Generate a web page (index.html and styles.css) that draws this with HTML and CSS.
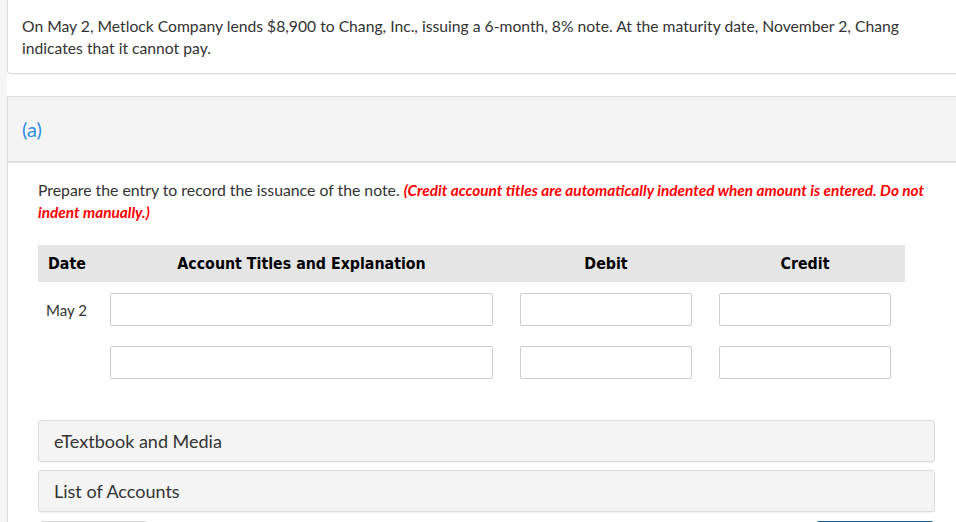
FILE: index.html
```html
<!DOCTYPE html>
<html>
<head>
<meta charset="utf-8">
<link rel="stylesheet" href="styles.css">
</head>
<body>
<main class="page">
  <div class="question-card">
    <p class="question-text">On May 2, Metlock Company lends $8,900 to Chang, Inc., issuing a 6-month, 8% note. At the maturity date, November 2, Chang indicates that it cannot pay.</p>
  </div>

  <section class="part">
    <header class="part-header"><span class="part-label">(a)</span></header>
    <div class="part-body">
      <p class="instructions">Prepare the entry to record the issuance of the note. <em class="warning">(Credit account titles are automatically indented when amount is entered. Do not indent manually.)</em></p>

      <div class="journal">
        <div class="journal-head">
          <div class="th th-date">Date</div>
          <div class="th th-acct">Account Titles and Explanation</div>
          <div class="th th-amt">Debit</div>
          <div class="th th-amt">Credit</div>
        </div>
        <div class="journal-row">
          <div class="cell cell-date">May 2</div>
          <div class="cell cell-acct"><input class="field" type="text"></div>
          <div class="cell cell-amt"><input class="field" type="text"></div>
          <div class="cell cell-amt"><input class="field" type="text"></div>
        </div>
        <div class="journal-row">
          <div class="cell cell-date"></div>
          <div class="cell cell-acct"><input class="field" type="text"></div>
          <div class="cell cell-amt"><input class="field" type="text"></div>
          <div class="cell cell-amt"><input class="field" type="text"></div>
        </div>
      </div>

      <div class="resources">
        <div class="resource">eTextbook and Media</div>
        <div class="resource">List of Accounts</div>
      </div>

      <div class="actions">
        <div class="btn btn-secondary"></div>
        <div class="btn btn-primary"></div>
      </div>
    </div>
  </section>
</main>
</body>
</html>
```

FILE: styles.css
```css
html, body {
  margin: 0;
  padding: 0;
  overflow: hidden;
}

body {
  background: #f6f6f6;
  font-family: Lato, "Open Sans", sans-serif;
  color: #333333;
  width: 956px;
  height: 522px;
}

.page {
  margin-left: 7px;
  width: 960px;
  min-height: 522px;
  background: #ffffff;
}

.question-card {
  background: #ffffff;
  border: 1px solid #dcdcdc;
  border-top: none;
  border-radius: 0 0 4px 4px;
  padding: 15px 14px 14px 14px;
  box-shadow: 0 1px 1px rgba(0,0,0,0.04);
}

.question-text {
  margin: 0;
  font-size: 15.7px;
  line-height: 22px;
  width: 900px;
}

.part {
  margin-top: 22px;
  border: 1px solid #dcdcdc;
  border-bottom: none;
  border-right: none;
}

.part-header {
  height: 64px;
  background: #f4f4f4;
  border-bottom: 2px solid #dfdfdf;
  display: flex;
  align-items: center;
  padding-left: 14px;
}

.part-label {
  color: #2f8ae0;
  font-size: 20px;
}

.part-body {
  padding: 16px 30px 0 30px;
}

.instructions {
  margin: 0;
  font-size: 15.8px;
  line-height: 22px;
  width: 900px;
}

.warning {
  color: #ff0000;
  font-weight: bold;
  font-style: italic;
  font-size: 15.35px;
}

.journal {
  margin-top: 22px;
  width: 867px;
}

.journal-head,
.journal-row {
  display: grid;
  grid-template-columns: 72px 397px 199px 199px;
}

.journal-head {
  background: #e5e5e5;
  height: 37px;
  align-items: center;
}

.th {
  font-family: "DejaVu Sans Condensed", "DejaVu Sans", Verdana, sans-serif;
  font-weight: bold;
  font-size: 15.8px;
  color: #000000;
}

.th-date {
  padding-left: 10px;
}

.th-acct {
  text-align: center;
  padding-right: 14px;
}

.th-amt {
  text-align: center;
  padding: 0 14px 0 13px;
}

.journal-row {
  margin-top: 11px;
  align-items: center;
}

.journal-row + .journal-row {
  margin-top: 20px;
}

.cell-date {
  font-size: 15px;
  padding-left: 8px;
  color: #333333;
}

.cell-acct {
  padding-right: 14px;
}

.cell-amt {
  padding: 0 14px 0 13px;
}

.field {
  display: block;
  box-sizing: border-box;
  width: 100%;
  height: 33px;
  margin: 0;
  border: 1px solid #cccccc;
  border-radius: 2px;
  background: #ffffff;
  outline: none;
}

.resources {
  margin-top: 41px;
  width: 897px;
  display: flex;
  flex-direction: column;
  gap: 8px;
}

.resource {
  box-sizing: border-box;
  height: 42px;
  background: #f4f4f4;
  border: 1px solid #dcdcdc;
  border-radius: 3px;
  box-shadow: 0 1px 1px rgba(0,0,0,0.06);
  font-size: 18px;
  display: flex;
  align-items: center;
  padding-left: 15px;
}

.actions {
  margin-top: 9px;
  width: 897px;
  display: flex;
  justify-content: space-between;
  padding: 0 1px 0 2px;
  box-sizing: border-box;
}

.btn {
  height: 34px;
  border-radius: 3px;
}

.btn-secondary {
  width: 106px;
  background: #f4f4f4;
  border: 1px solid #d6d6d6;
}

.btn-primary {
  width: 116px;
  background: #1a6fb5;
  border: 1px solid #15609e;
}
```
